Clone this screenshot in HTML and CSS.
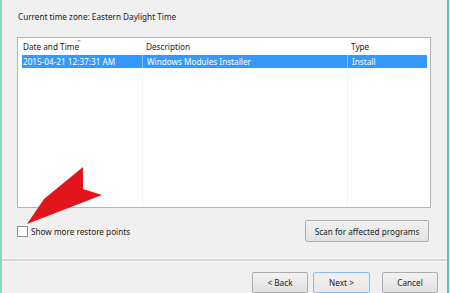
FILE: index.html
```html
<!DOCTYPE html>
<html lang="en">
<head>
    <meta charset="UTF-8">
    <meta name="viewport" content="width=device-width, initial-scale=1.0">
    <title>System Restore</title>
    <link rel="stylesheet" href="styles.css">
</head>
<body>
    <div class="window">
        <p class="tz">Current time zone: Eastern Daylight Time</p>

        <div class="list">
            <div class="list-head">
                <div class="col first">Date and Time<span class="sort"></span></div>
                <div class="col">Description</div>
                <div class="col">Type</div>
            </div>
            <div class="list-row selected">
                <div class="col">2015-04-21 12:37:31 AM</div>
                <div class="col">Windows Modules Installer</div>
                <div class="col">Install</div>
            </div>
        </div>

        <div class="options">
            <label class="check"><span class="box"></span>Show more restore points</label>
            <button class="btn scan">Scan for affected programs</button>
        </div>

        <div class="sep"></div>

        <div class="actions">
            <button class="btn">&lt; Back</button>
            <button class="btn next">Next &gt;</button>
            <button class="btn cancel">Cancel</button>
        </div>

        <!-- red pointer drawn over the dialog -->
        <svg class="arrow" viewBox="0 0 450 293" width="450" height="293">
            <polygon points="27,224 44,199 83,167 83,189 102,195" fill="#e3151c"/>
        </svg>
    </div>
</body>
</html>
```

FILE: styles.css
```css
body {
    margin: 0;
    width: 450px;
    height: 293px;
    overflow: hidden;
    background-color: #f4f4f4;
    font-family: "Noto Sans", Arial, sans-serif;
    font-size: 8.2px;
    color: #1a1a1a;
}
.window {
    position: relative;
    box-sizing: border-box;
    width: 449px;
    height: 293px;
    display: flex;
    flex-direction: column;
    padding: 10px 16px 0 15px;
    background-color: #f0f0f0;
    border-left: 2px solid #84d9bd;
    border-right: 2px solid #52c4c6;
    box-shadow: inset 3px 0 #f6eced;
}
.tz {
    margin: 0 0 0 1px;
    line-height: 14px;
}
.list {
    box-sizing: border-box;
    height: 171px;
    margin-top: 13px;
    padding: 0 3px 0 4px;
    border: 1px solid #b4b4b4;
    background-color: #fff;
    background-image:
        linear-gradient(to right, transparent 124px, #f4f4f4 124px, #f4f4f4 125px, transparent 125px),
        linear-gradient(to right, transparent 329px, #f4f4f4 329px, #f4f4f4 330px, transparent 330px);
}
.list-head, .list-row {
    display: grid;
    grid-template-columns: 120px 205px 1fr;
}
.list-head {
    height: 17px;
    line-height: 17px;
    background: #fff;
}
.list-row {
    height: 13px;
    line-height: 13px;
}
.col {
    position: relative;
    padding-left: 1px;
    white-space: nowrap;
    overflow: hidden;
}
.col + .col {
    padding-left: 4px;
}
.sort {
    position: absolute;
    left: 55px;
    top: 2px;
    border-left: 2px solid transparent;
    border-right: 2px solid transparent;
    border-top: 2px solid #a8a8a8;
}
.selected {
    background-color: #3399ff;
    color: #fff;
}
.selected .col + .col {
    border-left: 1px solid #86c1ff;
}
.options {
    display: flex;
    justify-content: space-between;
    align-items: center;
    margin-top: 12px;
    padding-right: 2px;
}
.check {
    display: flex;
    align-items: center;
    gap: 3px;
}
.box {
    box-sizing: border-box;
    width: 11px;
    height: 11px;
    border: 1px solid #8e8f8f;
    background-color: #fff;
}
.btn {
    box-sizing: border-box;
    width: 56px;
    height: 21px;
    padding: 0;
    font: inherit;
    color: #1a1a1a;
    border: 1px solid #acacac;
    border-radius: 2px;
    background: linear-gradient(#f2f2f2, #e2e2e2);
}
.scan {
    width: 124px;
    height: 22px;
}
.sep {
    height: 2px;
    margin: 16px -16px 0 -15px;
    background-color: #d3d3d3;
    border-top: 1px solid #fafafa;
    border-bottom: 1px solid #fafafa;
}
.actions {
    display: flex;
    justify-content: flex-end;
    margin: 10px -7px 0 0;
}
.next {
    width: 57px;
    margin-left: 5px;
    border-color: #8dbde8;
    box-shadow: inset 0 0 0 1px #dcecf8;
    background: linear-gradient(#f3f1f0, #ebe7e4);
}
.cancel {
    margin-left: 12px;
}
.arrow {
    position: absolute;
    left: -2px;
    top: 0;
    pointer-events: none;
}
```
